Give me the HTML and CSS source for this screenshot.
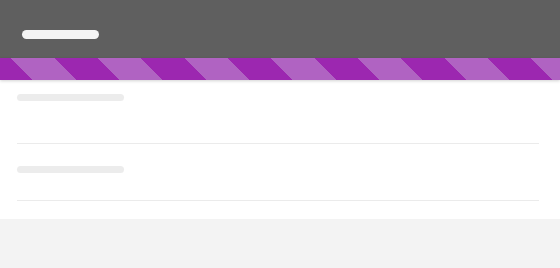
FILE: index.html
```html
<!DOCTYPE html>
<html>
<head>
<meta charset="utf-8">
<link rel="stylesheet" href="styles.css">
</head>
<body>
<header class="topbar">
  <div class="title-skel"></div>
</header>
<div class="stripes"></div>
<main class="content">
  <div class="item item-first"><div class="line-skel"></div></div>
  <div class="item item-second"><div class="line-skel"></div></div>
</main>
</body>
</html>
```
FILE: styles.css
```css
html, body {
  margin: 0;
  padding: 0;
  background: #f3f3f3;
  font-family: "Liberation Sans", Arial, sans-serif;
}
.topbar {
  height: 58px;
  background: #5f5f5f;
  box-sizing: border-box;
  padding: 30px 0 0 22px;
}
.title-skel {
  width: 77px;
  height: 9px;
  border-radius: 5px;
  background: #f4f4f4;
}
.stripes {
  position: relative;
  z-index: 1;
  height: 22px;
  background: repeating-linear-gradient(45deg,
    #9c27b0 0, #9c27b0 23.3px,
    #b063c2 23.3px, #b063c2 53.9px,
    #9c27b0 53.9px, #9c27b0 61.25px);
  box-shadow: 0 1px 3px rgba(0, 0, 0, 0.18);
}
.content {
  background: #fff;
  padding: 0 21px 18px 17px;
}
.item {
  border-bottom: 1px solid #ebebeb;
}
.item-first {
  padding: 14px 0 42px;
}
.item-second {
  padding: 22px 0 27px;
}
.line-skel {
  width: 107px;
  height: 7px;
  border-radius: 4px;
  background: #ececec;
}
```
